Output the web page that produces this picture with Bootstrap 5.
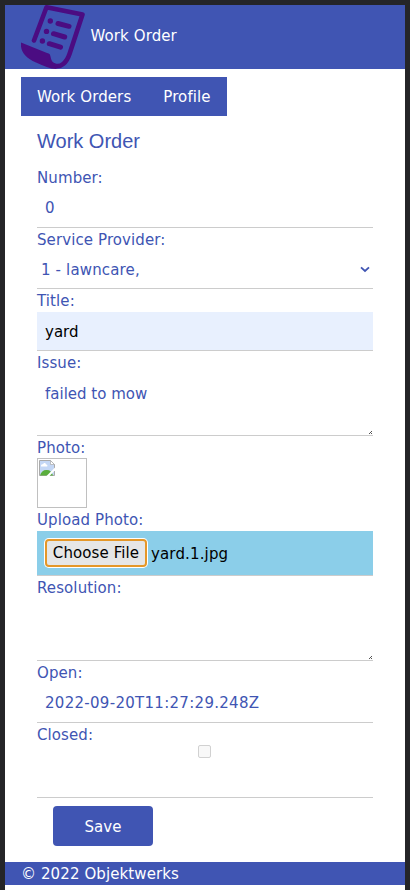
<!DOCTYPE html>
<html lang="en">
<head>
<meta charset="utf-8">
<meta name="viewport" content="width=device-width, initial-scale=1">
<title>Work Order</title>
<link href="https://cdn.jsdelivr.net/npm/bootstrap@5.3.0/dist/css/bootstrap.min.css" rel="stylesheet">
<style>
:root { --brand: #4055b3; }
body { font-family: Verdana, "DejaVu Sans", sans-serif; font-size: 15px; line-height: 23px; letter-spacing: .1px; color: var(--brand); background: #fff; overflow: hidden; }
.app-shell { height: 890px; border: 5px solid #252528; border-bottom: 0; }
.brand-bg { background: var(--brand); color: #fff; }
.app-header { height: 64px; }
.app-header svg { width: 64px; height: 64px; }
.app-title { margin: 0 0 1px 5.5px; }
.app-menu { height: 39px; margin: 8px 0 0 16px; }
.app-menu .nav-link { color: #fff; line-height: 23px; padding-top: 9px; padding-bottom: 7px; }
.page-title { font: 20px/28px "Liberation Sans", Arial, sans-serif; letter-spacing: 0; margin: 11px 0 11px; }
.work-form { margin: 0 32px; }
.field { height: 62px; border-bottom: 1px solid #ccc; }
.field-select { height: 61px; }
.field-area { height: 85px; }
.field-photo { height: 72px; border: 0; }
.field-upload { height: 68px; }
.field-closed { height: 75px; }
.field > label { height: 23px; padding-top: 1px; flex: none; }
.field-photo > label, .field-closed > label { height: 22px; }
.field .entry { border: 0; border-radius: 0; padding: 0 8px; color: var(--brand); font-size: 15px; line-height: 23px; letter-spacing: 0; background: #fff; min-height: 0; box-shadow: none; outline: 0; }
.field textarea.entry { padding: 9px 8px 0; resize: none; display: block; }
.field .entry.autofilled { background: #e8f0fe; color: #000; padding-top: 2px; }
.field .entry.timestamp { letter-spacing: .29px; }
.field select.entry { padding: 1px 32px 0 4px; appearance: none; letter-spacing: .15px; }
.chevron { right: 3px; top: 15px; width: 10px; height: 7px; }
.grip { right: 1px; bottom: 1px; width: 3px; height: 3px; }
.photo-box { width: 50px; height: 50px; border: 1px solid #c0c0c0; padding: 1px; }
.photo-box svg { display: block; width: 16px; height: 16px; }
.file-row { background: #8bcee9; color: #000; padding: 0 8px; }
.file-btn { background: #e6e6e6; border: 0; border-radius: 2px; outline: 2px solid #e59728; box-shadow: 0 0 0 3px #fff; color: #000; height: 24px; width: 98px; padding: 1px 0 0; font-size: 15px; line-height: 23px; letter-spacing: .1px; margin-left: 2px; white-space: nowrap; }
.file-name { margin-left: 6px; padding-top: 2px; letter-spacing: .15px; }
.closed-box { width: 13px; height: 13px; border: 1px solid #d1d1d1; border-radius: 2px; background: #f8f8f8; appearance: none; margin: 0 1px 0 0; }
.btn-save { width: 100px; height: 40px; margin: 8px 0 16px 16px; border: 0; border-radius: 4px; font-size: 15px; padding: 2px 0 0; letter-spacing: .1px; }
.app-footer { height: 23px; padding: 1px 0 0 16px; }
</style>
<script src="https://cdn.jsdelivr.net/npm/bootstrap@5.3.0/dist/js/bootstrap.bundle.min.js"></script>
</head>
<body>
<div class="app-shell">
  <header class="app-header brand-bg d-flex align-items-center ps-3">
    <svg viewBox="0 0 64 64" fill="none" stroke="#4b0c82" stroke-linecap="round" stroke-linejoin="round" aria-hidden="true">
      <path d="M13 35.5 L25.500 2.3 L61.5 9.5 L48.500 49 C45.500 58 40 62 35 61 C29 60 28 56 27 51" stroke-width="4.6"/>
      <path d="M0 37.5 L28.5 49 C28 57 31 61 37 62 L35 64 C29 64 23 61 15 57.500 C4 53 -1 46 0 37.500 Z" fill="#4b0c82" stroke="none"/>
      <path d="M37 18.500 L48 21.300 M32.500 28.700 L43.700 32 M28.300 38.700 L39.500 42.200" stroke-width="5"/>
      <g fill="#4b0c82" stroke="none"><circle cx="29.300" cy="16" r="2.700"/><circle cx="25.500" cy="26.400" r="2.700"/><circle cx="21.400" cy="36" r="2.700"/></g>
    </svg>
    <span class="app-title">Work Order</span>
  </header>
  <nav class="app-menu brand-bg d-inline-flex align-items-center align-top">
    <a class="nav-link px-3" href="#">Work Orders</a>
    <a class="nav-link px-3" href="#">Profile</a>
  </nav>
  <main>
    <form class="work-form">
      <h1 class="page-title">Work Order</h1>
      <div class="field d-flex flex-column">
        <label for="number">Number:</label>
        <input id="number" class="entry w-100 flex-fill" value="0" readonly>
      </div>
      <div class="field field-select d-flex flex-column">
        <label for="provider">Service Provider:</label>
        <div class="position-relative d-flex flex-fill">
          <select id="provider" class="entry w-100"><option>1 - lawncare,</option></select>
          <svg class="chevron position-absolute pe-none" viewBox="0 0 10 7" fill="none" stroke="#4055b3" stroke-width="1.800"><path d="M1 1.300 L5 5 L9 1.300"/></svg>
        </div>
      </div>
      <div class="field d-flex flex-column">
        <label for="title">Title:</label>
        <input id="title" class="entry autofilled w-100 flex-fill" value="yard">
      </div>
      <div class="field field-area d-flex flex-column position-relative">
        <label for="issue">Issue:</label>
        <textarea id="issue" class="entry w-100 flex-fill">failed to mow</textarea>
        <svg class="grip position-absolute" viewBox="0 0 3 3" fill="#555" shape-rendering="crispEdges"><path d="M2 0h1v1h-1zM1 1h1v1h-1zM0 2h1v1h-1zM2 2h1v1h-1z"/></svg>
      </div>
      <div class="field field-photo d-flex flex-column">
        <label>Photo:</label>
        <div class="photo-box">
          <svg viewBox="0 0 16 16" role="img" aria-label="Photo">
            <path d="M.5.500H11.500L15.500 4.500V15.500H.5Z" fill="#c4d7f5" stroke="#aaa"/>
            <path d="M11.500.500V4.500H15.500Z" fill="#fff" stroke="#aaa" stroke-width=".7"/>
            <path d="M2 6.500C1.500 4.500 3.500 4 4 4.300C5 2 7 3 7 4.500C9 4.500 8.500 6.500 8 6.500Z" fill="#fff"/>
            <path d="M1 15.500C2 11.500 5 9.500 8 10C11 10 13 12 14 15.500Z" fill="#5aae3d"/>
            <path d="M16 7.500V10.200L10.500 16H7.500Z" fill="#fff"/>
          </svg>
        </div>
      </div>
      <div class="field field-upload d-flex flex-column">
        <label>Upload Photo:</label>
        <div class="file-row d-flex align-items-center flex-fill">
          <button type="button" class="file-btn">Choose File</button>
          <span class="file-name">yard.1.jpg</span>
        </div>
      </div>
      <div class="field field-area d-flex flex-column position-relative">
        <label for="resolution">Resolution:</label>
        <textarea id="resolution" class="entry w-100 flex-fill"></textarea>
        <svg class="grip position-absolute" viewBox="0 0 3 3" fill="#555" shape-rendering="crispEdges"><path d="M2 0h1v1h-1zM1 1h1v1h-1zM0 2h1v1h-1zM2 2h1v1h-1z"/></svg>
      </div>
      <div class="field d-flex flex-column">
        <label for="opened">Open:</label>
        <input id="opened" class="entry timestamp w-100 flex-fill" value="2022-09-20T11:27:29.248Z" readonly>
      </div>
      <div class="field field-closed d-flex flex-column">
        <label for="closed">Closed:</label>
        <input id="closed" type="checkbox" class="closed-box align-self-center" disabled>
      </div>
      <button type="button" class="btn btn-save brand-bg d-block">Save</button>
    </form>
  </main>
  <footer class="app-footer brand-bg">© 2022 Objektwerks</footer>
</div>
</body>
</html>
